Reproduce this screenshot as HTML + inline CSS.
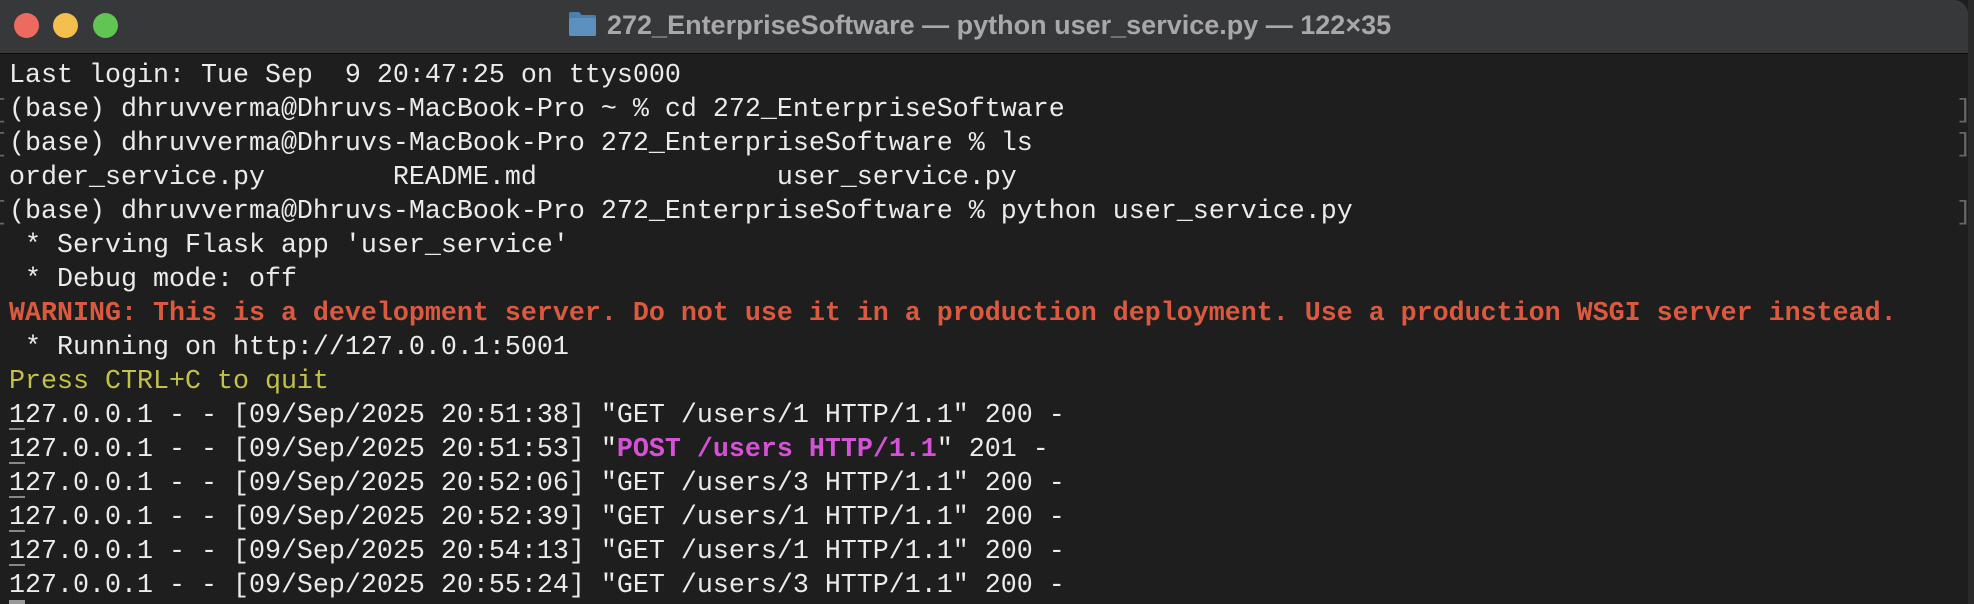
<!DOCTYPE html>
<html><head><meta charset="utf-8"><style>
html,body{margin:0;padding:0;background:#1e1e1e;width:1974px;height:604px;overflow:hidden}
#tb{position:absolute;left:0;top:0;width:1968px;height:53px;background:#37383a;border-bottom:1px solid #0c0c0c;border-top-right-radius:14px}
.dot{position:absolute;top:13px;width:25px;height:25px;border-radius:50%}
#title{position:absolute;left:607px;top:10px;font:bold 27px "Liberation Sans",sans-serif;color:#a8a8aa;white-space:pre}
#term{position:absolute;left:0;top:54px;width:1968px;height:550px;background:#1e1e1e}
.l{position:absolute;left:9px;font:26.67px/34px "Liberation Mono",monospace;color:#ebebeb;white-space:pre}
.r{color:#db5a3f;font-weight:bold}.y{color:#c3c14a}.p{color:#d552d6;font-weight:bold}
.br{position:absolute;font:26px/34px "Liberation Mono",monospace;color:#666;}
.cu{position:absolute;left:9px;width:16px;height:2px;background:#888}
</style></head><body>
<div id="tb">
<div class="dot" style="left:14px;background:#ed6a5e"></div>
<div class="dot" style="left:53px;background:#f5bf4f"></div>
<div class="dot" style="left:93px;background:#61c554"></div>
<svg style="position:absolute;left:568px;top:11px" width="29" height="26" viewBox="0 0 29 26"><path d="M1 3q0-2 2-2h8l3 3h12q2 0 2 2v17q0 2-2 2H3q-2 0-2-2z" fill="#4a7fae"/><rect x="1" y="7" width="27" height="18" rx="2" fill="#5b90bf"/></svg>
<div id="title">272_EnterpriseSoftware — python user_service.py — 122×35</div>
</div>
<div id="term"></div>
<div class="l" style="top:59px">Last login: Tue Sep  9 20:47:25 on ttys000</div>
<div class="l" style="top:93px">(base) dhruvverma@Dhruvs-MacBook-Pro ~ % cd 272_EnterpriseSoftware</div>
<div class="l" style="top:127px">(base) dhruvverma@Dhruvs-MacBook-Pro 272_EnterpriseSoftware % ls</div>
<div class="l" style="top:161px">order_service.py        README.md               user_service.py</div>
<div class="l" style="top:195px">(base) dhruvverma@Dhruvs-MacBook-Pro 272_EnterpriseSoftware % python user_service.py</div>
<div class="l" style="top:229px"> * Serving Flask app 'user_service'</div>
<div class="l" style="top:263px"> * Debug mode: off</div>
<div class="l r" style="top:297px">WARNING: This is a development server. Do not use it in a production deployment. Use a production WSGI server instead.</div>
<div class="l" style="top:331px"> * Running on http://127.0.0.1:5001</div>
<div class="l y" style="top:365px">Press CTRL+C to quit</div>
<div class="l" style="top:399px">127.0.0.1 - - [09/Sep/2025 20:51:38] "GET /users/1 HTTP/1.1" 200 -</div>
<div class="l" style="top:433px">127.0.0.1 - - [09/Sep/2025 20:51:53] "<span class="p">POST /users HTTP/1.1</span>" 201 -</div>
<div class="l" style="top:467px">127.0.0.1 - - [09/Sep/2025 20:52:06] "GET /users/3 HTTP/1.1" 200 -</div>
<div class="l" style="top:501px">127.0.0.1 - - [09/Sep/2025 20:52:39] "GET /users/1 HTTP/1.1" 200 -</div>
<div class="l" style="top:535px">127.0.0.1 - - [09/Sep/2025 20:54:13] "GET /users/1 HTTP/1.1" 200 -</div>
<div class="l" style="top:569px">127.0.0.1 - - [09/Sep/2025 20:55:24] "GET /users/3 HTTP/1.1" 200 -</div>
<div class="cu" style="top:428px"></div><div class="cu" style="top:462px"></div><div class="cu" style="top:496px"></div><div class="cu" style="top:530px"></div><div class="cu" style="top:564px"></div>
<div style="position:absolute;left:9px;top:600px;width:16px;height:4px;background:#999"></div>
<div class="br" style="left:-8px;top:93px">[</div><div class="br" style="left:-8px;top:127px">[</div><div class="br" style="left:-8px;top:195px">[</div>
<div class="br" style="left:1956px;top:93px">]</div><div class="br" style="left:1956px;top:127px">]</div><div class="br" style="left:1956px;top:195px">]</div>
<div style="position:absolute;left:1968px;top:0;width:6px;height:604px;background:#2a2a2a"></div>
</body></html>
